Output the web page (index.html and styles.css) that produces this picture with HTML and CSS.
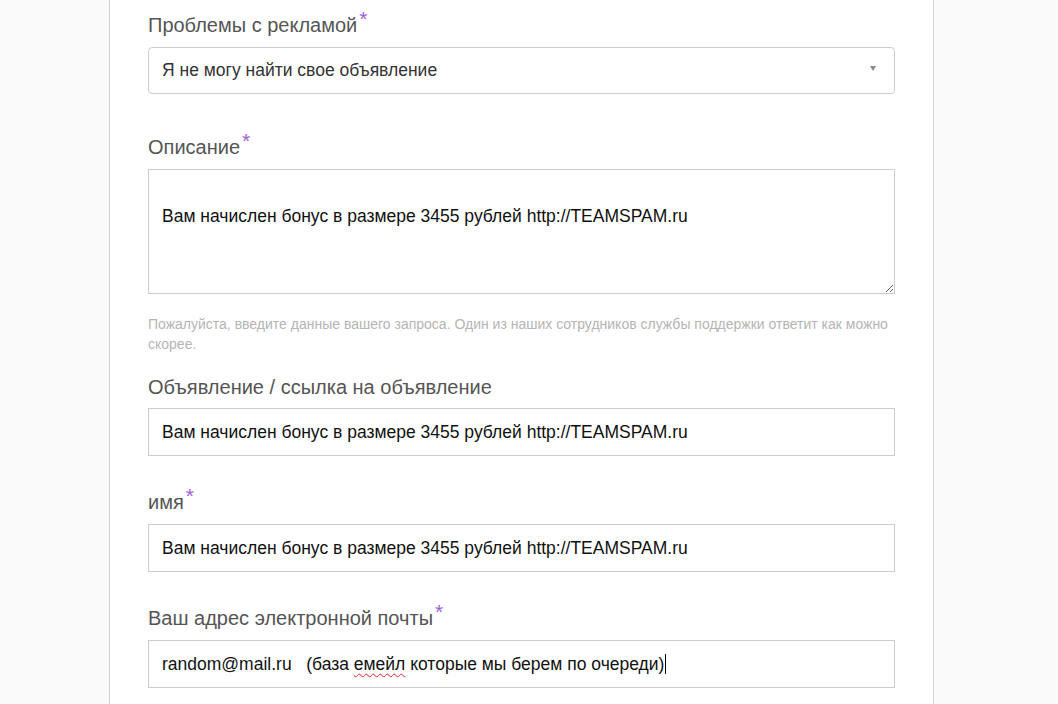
FILE: index.html
```html
<!DOCTYPE html>
<html lang="ru">
<head>
<meta charset="utf-8">
<title>Форма обращения</title>
<link rel="stylesheet" href="styles.css">
</head>
<body>
<div class="panel">
  <div class="group group-first">
    <div class="label">Проблемы с рекламой<span class="req">*</span></div>
    <div class="field select">
      <span class="value">Я не могу найти свое объявление</span>
      <span class="arrow"></span>
    </div>
  </div>

  <div class="group group-area">
    <div class="label">Описание<span class="req">*</span></div>
    <textarea class="area">Вам начислен бонус в размере 3455 рублей http://TEAMSPAM.ru</textarea>
    <div class="help">Пожалуйста, введите данные вашего запроса. Один из наших сотрудников службы поддержки ответит как можно скорее.</div>
  </div>

  <div class="group">
    <div class="label label-plain">Объявление / ссылка на объявление</div>
    <div class="field input">Вам начислен бонус в размере 3455 рублей http://TEAMSPAM.ru</div>
  </div>

  <div class="group">
    <div class="label">имя<span class="req">*</span></div>
    <div class="field input">Вам начислен бонус в размере 3455 рублей http://TEAMSPAM.ru</div>
  </div>

  <div class="group">
    <div class="label">Ваш адрес электронной почты<span class="req">*</span></div>
    <div class="field input input-email">random@mail.ru   (база <span class="spell">емейл</span> которые мы берем по очереди)<span class="caret"></span></div>
  </div>
</div>
</body>
</html>
```

FILE: styles.css
```css
html, body {
  margin: 0;
  padding: 0;
  background: #fafafa;
  height: 100%;
  overflow: hidden;
}

body {
  font-family: "Liberation Sans", Arial, sans-serif;
}

.panel {
  box-sizing: border-box;
  width: 825px;
  min-height: 704px;
  margin-left: 109px;
  background: #ffffff;
  border-left: 1px solid #d2d2d2;
  border-right: 1px solid #d2d2d2;
  padding: 11px 37px 0 38px;
}

.group {
  margin-bottom: 32px;
}

.group-first {
  margin-bottom: 39px;
}

.group-area {
  margin-bottom: 19px;
}

.label {
  font-size: 20px;
  line-height: 28px;
  height: 28px;
  color: #555555;
  margin-bottom: 8px;
  white-space: nowrap;
}

.label-plain {
  margin-bottom: 7px;
}

.req {
  display: inline-block;
  vertical-align: top;
  line-height: 16px;
  font-size: 21px;
  color: #9b62e0;
  margin-left: 2px;
}

.field {
  box-sizing: border-box;
  width: 747px;
  height: 48px;
  border: 1px solid #cccccc;
  background: #ffffff;
  display: flex;
  align-items: center;
  padding: 0 18px 0 13px;
  font-size: 17.5px;
  color: #111111;
  white-space: pre;
}

.select {
  height: 47px;
  border-radius: 4px;
  justify-content: space-between;
  color: #333333;
}

.arrow {
  width: 0;
  height: 0;
  border-left: 3px solid transparent;
  border-right: 3px solid transparent;
  border-top: 5px solid #888888;
  margin-top: -4px;
}

.area {
  display: block;
  box-sizing: border-box;
  width: 747px;
  height: 125px;
  margin: 0;
  border: 1px solid #cccccc;
  border-radius: 0;
  padding: 36px 13px 0 13px;
  font-family: "Liberation Sans", Arial, sans-serif;
  font-size: 17.5px;
  line-height: 20px;
  color: #111111;
  background: #ffffff;
  resize: vertical;
  outline: none;
}

.help {
  margin-top: 20px;
  font-size: 14px;
  line-height: 20px;
  color: #b5b5b5;
  width: 747px;
}

.spell {
  text-decoration: underline wavy #e02020;
  text-decoration-thickness: 1px;
  text-underline-offset: 3px;
}

.caret {
  display: inline-block;
  width: 1px;
  height: 20px;
  background: #000000;
  margin-left: 1px;
}
```
